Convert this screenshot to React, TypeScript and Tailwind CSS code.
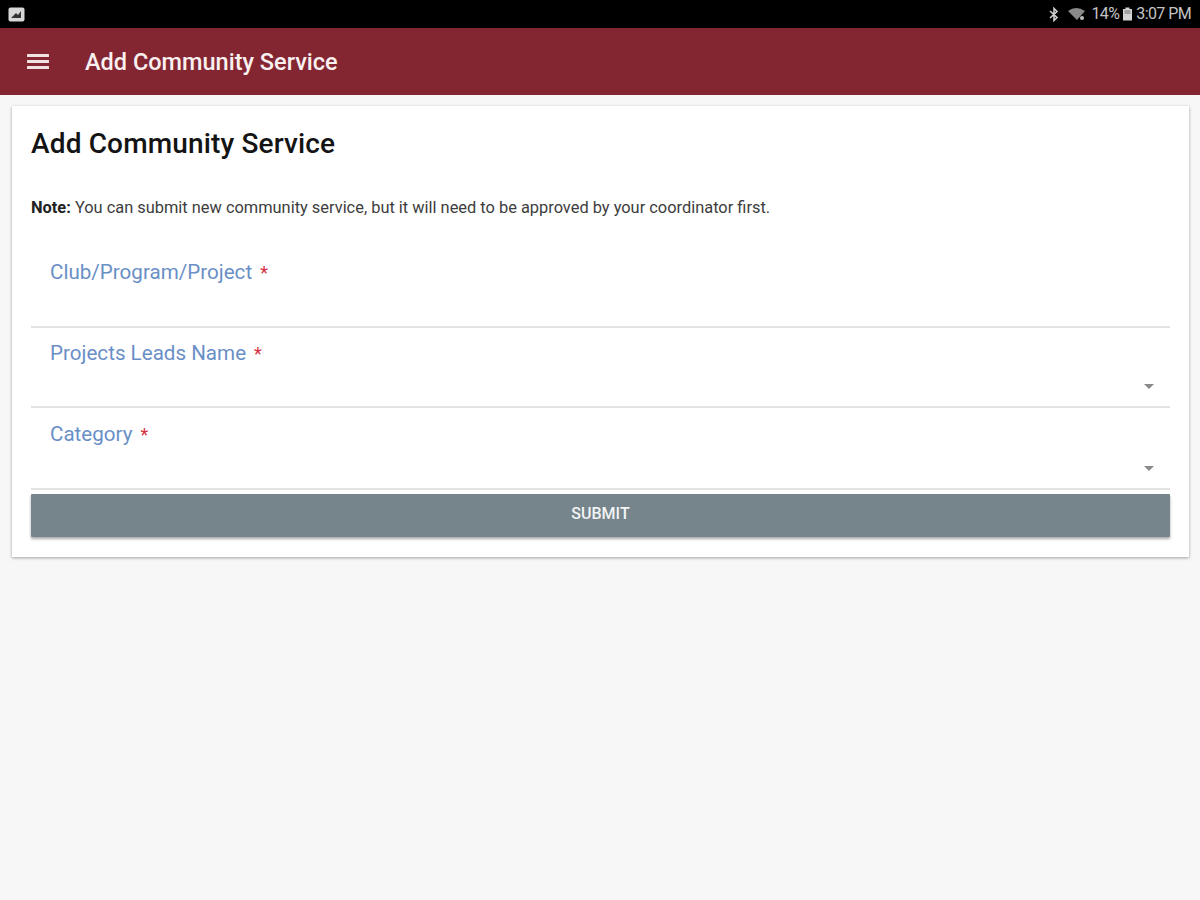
const fields = [
  { name: "Club/Program/Project", select: false, box: "pt-[23px] h-[92px]" },
  { name: "Projects Leads Name", select: true, box: "pt-[12px] h-[80px]" },
  { name: "Category", select: true, box: "pt-[13px] h-[82px]" },
]

function StatusBar() {
  return (
    <div className="h-7 bg-black flex items-center justify-between pl-2 pr-[9px] text-[#c4c4c4]">
      <svg width="17" height="15" viewBox="0 0 17 15">
        <rect x="0.5" y="0.5" width="16" height="14" rx="2" fill="#d8d8d8" />
        <path d="M3 11 L8 6 L10 8 L13 4 L13 11 Z" fill="#333" />
      </svg>
      <div className="flex items-center text-[16px] tracking-[-0.6px] leading-none">
        {/* bluetooth */}
        <svg width="12" height="15" viewBox="0 0 12 15" fill="none" stroke="#cfcfcf" strokeWidth="1.6" className="mr-[7px]">
          <path d="M2 4 L9 10.5 L6 13.5 V1.5 L9 4.5 L2 11" />
        </svg>
        {/* wifi */}
        <svg width="20" height="14" viewBox="0 0 20 14" className="mr-[4px]">
          <path d="M1 4 Q9 -2 18 4 L10 13 Z" fill="#8a8a8a" />
          <circle cx="15" cy="11" r="2" fill="#bdbdbd" />
        </svg>
        <span>14%</span>
        {/* battery */}
        <svg width="11" height="14" viewBox="0 0 11 14" className="mx-[3px]">
          <path d="M3.5 0.5 H7.5 V2 H10 V13.5 H1 V2 H3.5 Z" fill="#d4d4d4" />
          <path d="M2.5 4 H8.5 M2.5 6 H8.5" stroke="#555" strokeWidth="0.8" />
        </svg>
        <span>3:07 PM</span>
      </div>
    </div>
  )
}

function Arrow() {
  return (
    <svg width="10" height="5" viewBox="0 0 10 5" className="absolute right-[16px] bottom-[17px]">
      <path d="M0 0 H10 L5 5 Z" fill="#8a8a8a" />
    </svg>
  )
}

export default function App() {
  return (
    <div className="min-h-[900px] bg-[#f7f7f7] font-['Roboto',sans-serif]">
      <StatusBar />
      <header className="h-[67px] bg-[#842532] flex items-center pl-[27px] text-white">
        <svg width="22" height="16" viewBox="0 0 22 16" fill="#f0e2e2">
          <rect y="0" width="22" height="3" rx="0.5" />
          <rect y="6" width="22" height="3" rx="0.5" />
          <rect y="12" width="22" height="3" rx="0.5" />
        </svg>
        <h1 className="ml-[36px] pt-[2px] text-[23.5px] font-medium text-[#f9f0f0] leading-none">Add Community Service</h1>
      </header>
      <main className="pt-[11px] px-[12px]">
        <div className="w-[1177px] h-[451px] bg-white shadow-[0_1px_3px_rgba(0,0,0,0.35)] px-[19px]">
          <h2 className="pt-[22px] text-[28px] leading-[32px] font-medium text-[#141414] tracking-[0.15px]">Add Community Service</h2>
          <p className="mt-[38px] text-[16.4px] leading-[20px] text-[#3d3d3d]">
            <b className="font-bold text-[#222]">Note:</b> You can submit new community service, but it will need to be approved by your coordinator first.
          </p>
          <div className="mt-[18px] w-[1139px]">
            {fields.map((f) => (
              <div key={f.name} className={`relative border-b-2 border-[#e3e3e3] pl-[19px] ${f.box}`}>
                <span className="text-[20.6px] leading-[26px] text-[#6a8fc6]">{f.name}</span>
                <span className="ml-2 text-[18px] text-[#d3303f]">*</span>
                {f.select && <Arrow />}
              </div>
            ))}
            <button className="mt-[4px] w-full h-[43px] pb-[4px] bg-[#76848b] text-[#f1f3f4] text-[16px] font-medium rounded-[1px] shadow-[0_2px_3px_rgba(0,0,0,0.35)]">
              SUBMIT
            </button>
          </div>
        </div>
      </main>
    </div>
  )
}
